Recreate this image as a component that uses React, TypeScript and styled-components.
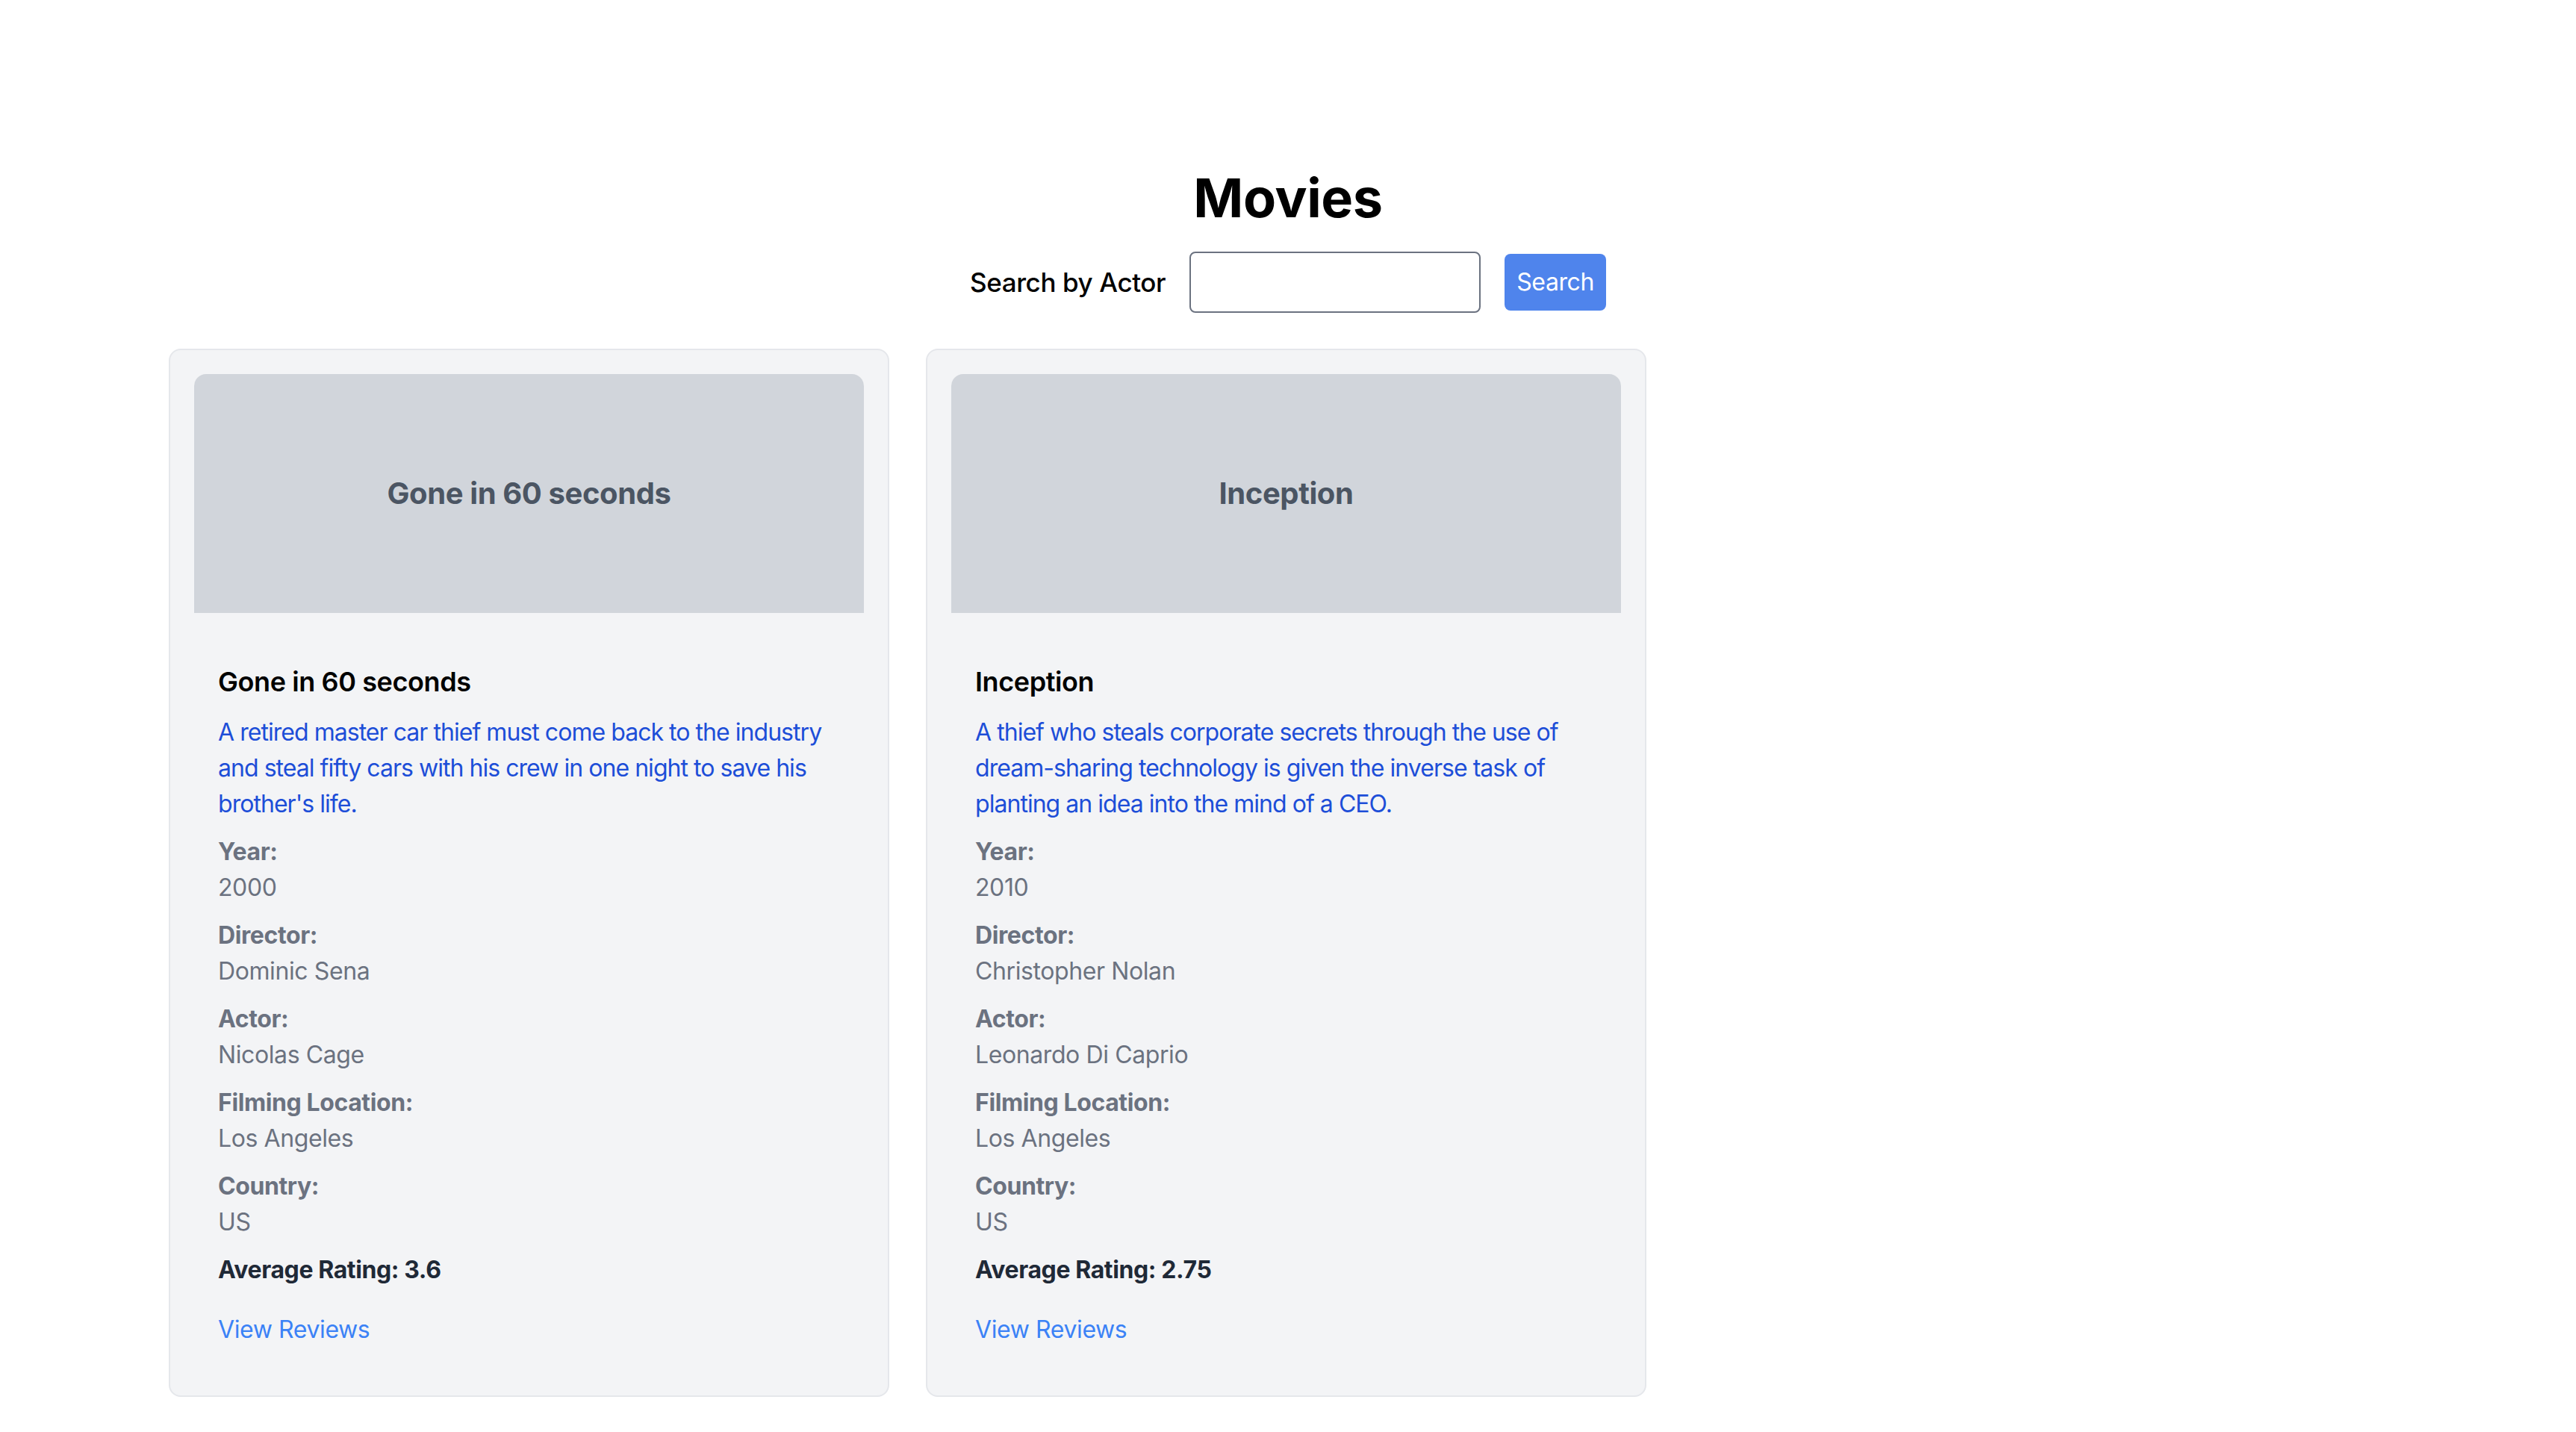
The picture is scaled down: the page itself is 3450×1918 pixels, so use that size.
import React from "react"
import styled, { createGlobalStyle } from "styled-components"

const GlobalStyle = createGlobalStyle`
    html, body {
        margin: 0;
        padding: 0;
        background: #ffffff;
    }
    body {
        font-family: Inter, "Noto Sans", "Liberation Sans", sans-serif;
        letter-spacing: -0.025em;
        color: #000000;
    }
    * {
        box-sizing: border-box;
    }
`

const Page = styled.main`
    padding: 225px 0 80px;
    display: flex;
    flex-direction: column;
    align-items: center;
`

const Title = styled.h1`
    margin: 0 0 32px;
    font-size: 72px;
    line-height: 80px;
    font-weight: 700;
    color: #000;
`

const SearchRow = styled.form`
    display: flex;
    align-items: center;
    gap: 32px;
    margin-bottom: 48px;
`

const SearchLabel = styled.label`
    font-size: 35px;
    line-height: 52px;
    font-weight: 500;
    color: #000;
`

const SearchInput = styled.input`
    width: 390px;
    height: 82px;
    padding: 0 16px;
    border: 2px solid #6b7280;
    border-radius: 8px;
    font-family: inherit;
    font-size: 32px;
    background: #fff;
    outline: none;
`

const SearchButton = styled.button`
    height: 76px;
    padding: 0 16px;
    border: none;
    border-radius: 8px;
    background: #4f84ec;
    color: #fff;
    font-family: inherit;
    letter-spacing: inherit;
    font-size: 32px;
    line-height: 48px;
    cursor: pointer;
`

const Grid = styled.section`
    display: grid;
    grid-template-columns: repeat(3, 965px);
    gap: 49px;
    margin-right: 5px;
`

const Card = styled.article`
    background: #f3f4f6;
    border: 2px solid #e5e7eb;
    border-radius: 16px;
    padding: 32px;
`

const Poster = styled.div`
    height: 320px;
    margin-bottom: 32px;
    border-radius: 16px 16px 0 0;
    background: #d1d5db;
    display: flex;
    align-items: center;
    justify-content: center;
    font-size: 40px;
    line-height: 56px;
    font-weight: 700;
    color: #4b5563;
`

const Body = styled.div`
    padding: 32px;
`

const MovieName = styled.h2`
    margin: 0 0 16px;
    font-size: 36px;
    line-height: 56px;
    font-weight: 600;
    color: #000;
`

const Plot = styled.p`
    margin: 0 0 16px;
    font-size: 32px;
    line-height: 48px;
    letter-spacing: -0.03em;
    color: #1d4ed8;
`

const Detail = styled.div`
    margin-bottom: 16px;
    font-size: 32px;
    line-height: 48px;
    color: #6b7280;
`

const DetailLabel = styled.div`
    font-weight: 700;
`

const Rating = styled.p`
    margin: 0;
    font-size: 32px;
    line-height: 48px;
    font-weight: 700;
    color: #1f2937;
`

const ReviewsLink = styled.a`
    display: block;
    margin-top: 32px;
    font-size: 32px;
    line-height: 48px;
    color: #3b82f6;
    text-decoration: none;
`

type Movie = {
    title: string
    plot: string
    year: string
    director: string
    actor: string
    location: string
    country: string
    rating: string
}

const movies: Movie[] = [
    {
        title: "Gone in 60 seconds",
        plot: "A retired master car thief must come back to the industry and steal fifty cars with his crew in one night to save his brother's life.",
        year: "2000",
        director: "Dominic Sena",
        actor: "Nicolas Cage",
        location: "Los Angeles",
        country: "US",
        rating: "3.6",
    },
    {
        title: "Inception",
        plot: "A thief who steals corporate secrets through the use of dream-sharing technology is given the inverse task of planting an idea into the mind of a CEO.",
        year: "2010",
        director: "Christopher Nolan",
        actor: "Leonardo Di Caprio",
        location: "Los Angeles",
        country: "US",
        rating: "2.75",
    },
]

const MovieCard = ({ movie }: { movie: Movie }) => {
    const details: [string, string][] = [
        ["Year:", movie.year],
        ["Director:", movie.director],
        ["Actor:", movie.actor],
        ["Filming Location:", movie.location],
        ["Country:", movie.country],
    ]
    return (
        <Card>
            <Poster>{movie.title}</Poster>
            <Body>
                <MovieName>{movie.title}</MovieName>
                <Plot>{movie.plot}</Plot>
                {details.map(([label, value]) => (
                    <Detail key={label}>
                        <DetailLabel>{label}</DetailLabel>
                        <div>{value}</div>
                    </Detail>
                ))}
                <Rating>Average Rating: {movie.rating}</Rating>
                <ReviewsLink href="#">View Reviews</ReviewsLink>
            </Body>
        </Card>
    )
}

const App = () => {
    return (
        <>
            <GlobalStyle />
            <Page>
                <Title>Movies</Title>
                <SearchRow onSubmit={(e) => e.preventDefault()}>
                    <SearchLabel htmlFor="actor">Search by Actor</SearchLabel>
                    <SearchInput id="actor" type="text" />
                    <SearchButton type="submit">Search</SearchButton>
                </SearchRow>
                <Grid>
                    {movies.map((m) => (
                        <MovieCard key={m.title} movie={m} />
                    ))}
                </Grid>
            </Page>
        </>
    )
}

export default App
